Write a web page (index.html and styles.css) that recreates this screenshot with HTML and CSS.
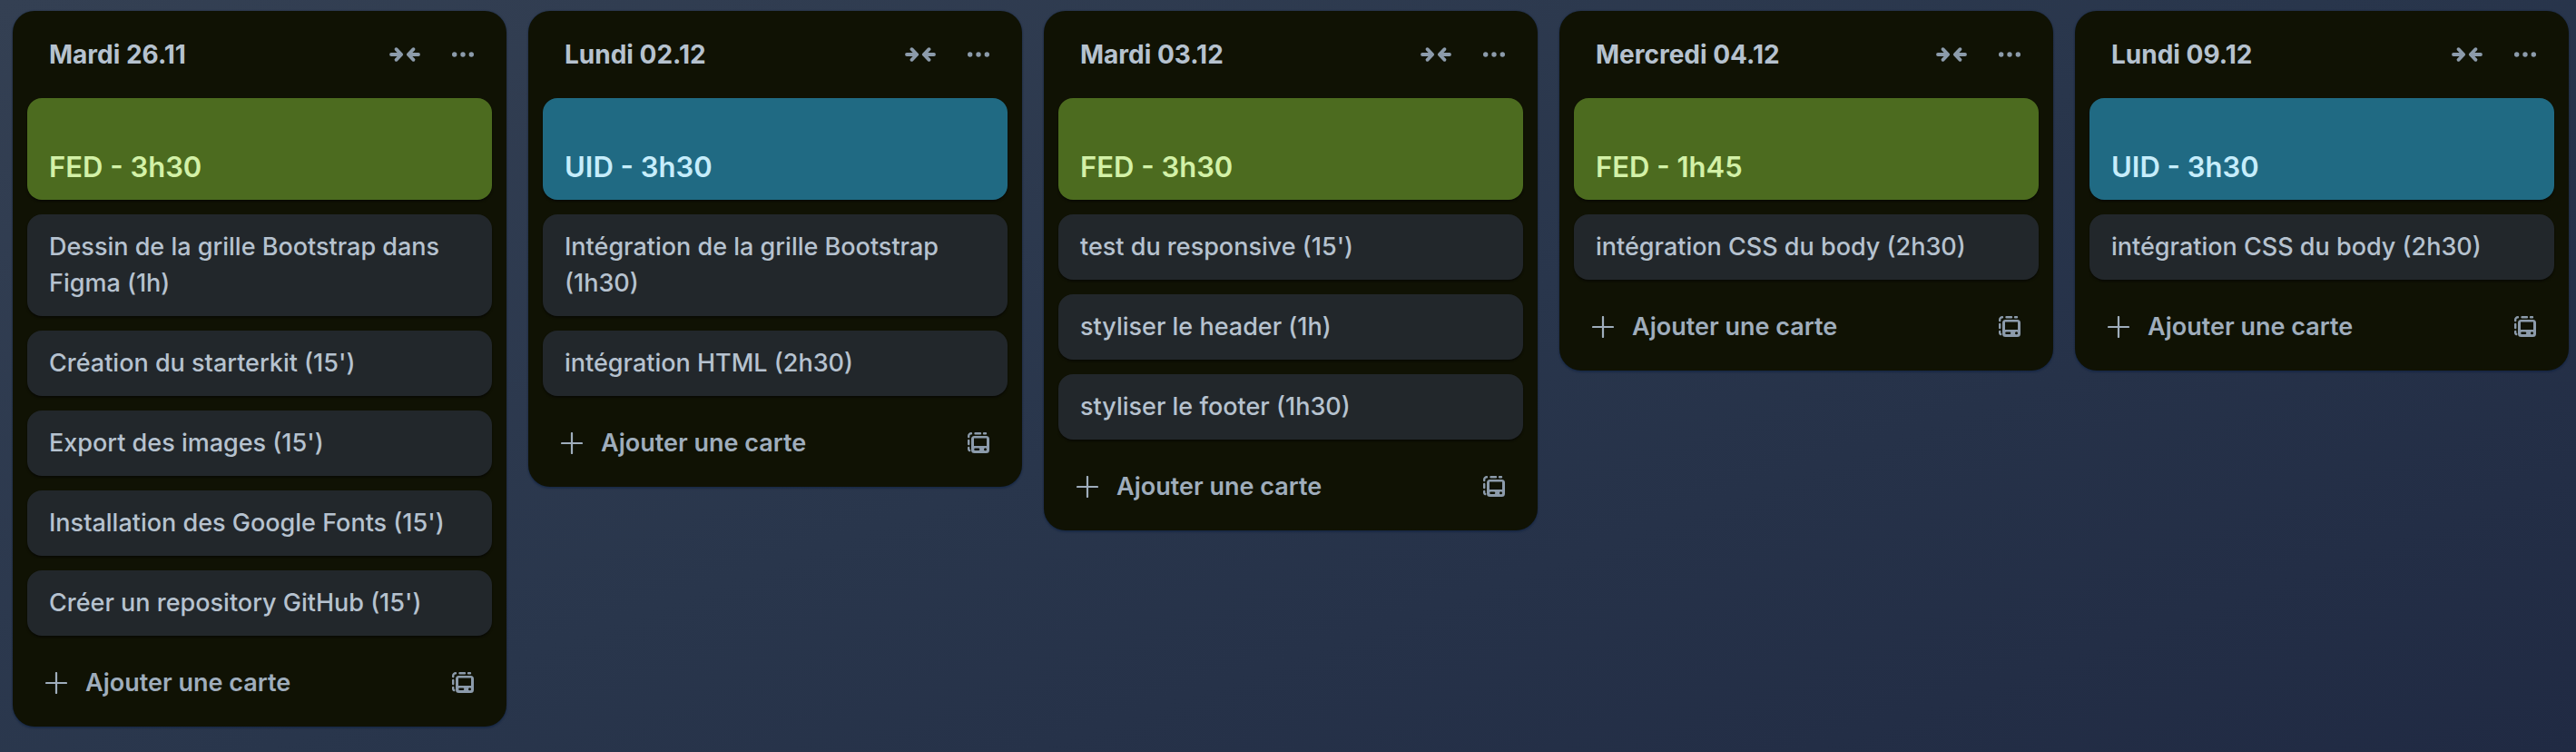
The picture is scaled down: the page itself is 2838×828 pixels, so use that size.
FILE: index.html
```html
<!DOCTYPE html>
<html lang="fr">
<head>
<meta charset="utf-8">
<meta name="viewport" content="width=device-width, initial-scale=1">
<title>Planning</title>
<link rel="stylesheet" href="styles.css">
</head>
<body>
<svg class="sprite" aria-hidden="true">
  <symbol id="collapse" viewBox="0 0 36 20">
    <path d="M3 10h10.500M8.500 4.200 14.200 10 8.500 15.800M33 10H22.500M27.500 4.200 21.800 10l5.700 5.800" fill="none" stroke="currentColor" stroke-width="3.800" stroke-linecap="round" stroke-linejoin="round"/>
  </symbol>
  <symbol id="more" viewBox="0 0 24 24">
    <g fill="currentColor"><circle cx="2.700" cy="12" r="2.700"/><circle cx="12" cy="12" r="2.700"/><circle cx="21.300" cy="12" r="2.700"/></g>
  </symbol>
  <symbol id="plus" viewBox="0 0 24 24">
    <path d="M12 1v22M1 12h22" fill="none" stroke="currentColor" stroke-width="2.200" stroke-linecap="round"/>
  </symbol>
  <symbol id="template" viewBox="0 0 24 24">
    <path d="M1.200 5V4a2.800 2.800 0 0 1 2.800-2.800M8.500 1.200h5.500M18 1.200h2M1.200 9v4M1.200 17v1.500a1.500 1.500 0 0 0 1 1.500" fill="none" stroke="currentColor" stroke-width="2.400" stroke-linecap="round"/>
    <path fill="currentColor" fill-rule="evenodd" d="M7.500 4h13A3.500 3.500 0 0 1 24 7.500v12a3.500 3.500 0 0 1-3.500 3.500h-13A3.500 3.500 0 0 1 4 19.500v-12A3.500 3.500 0 0 1 7.500 4zM7 6.500V15h14V6.500zM8.500 17.500a1.300 1.300 0 0 0 0 2.600h3.500a1.300 1.300 0 0 0 0-2.600zM19.500 17.300a1.500 1.500 0 1 0 0 3 1.500 1.500 0 0 0 0-3z"/>
  </symbol>
</svg>
<main class="board">
  <section class="list">
    <header class="list-header">
      <h2 class="list-title">Mardi 26.11</h2>
      <button class="icon-button" type="button" aria-label="Réduire la liste"><svg class="icon-wide"><use href="#collapse"/></svg></button>
      <button class="icon-button" type="button" aria-label="Actions de la liste"><svg class="icon"><use href="#more"/></svg></button>
    </header>
    <ul class="cards">
      <li class="card cover cover-lime">FED - 3h30</li>
      <li class="card">Dessin de la grille Bootstrap dans Figma (1h)</li>
      <li class="card">Création du starterkit (15')</li>
      <li class="card">Export des images (15')</li>
      <li class="card">Installation des Google Fonts (15')</li>
      <li class="card">Créer un repository GitHub (15')</li>
    </ul>
    <footer class="list-footer">
      <button class="add-button" type="button"><svg class="icon"><use href="#plus"/></svg>Ajouter une carte</button>
      <button class="icon-button" type="button" aria-label="Créer à partir d'un modèle"><svg class="icon"><use href="#template"/></svg></button>
    </footer>
  </section>
  <section class="list">
    <header class="list-header">
      <h2 class="list-title">Lundi 02.12</h2>
      <button class="icon-button" type="button" aria-label="Réduire la liste"><svg class="icon-wide"><use href="#collapse"/></svg></button>
      <button class="icon-button" type="button" aria-label="Actions de la liste"><svg class="icon"><use href="#more"/></svg></button>
    </header>
    <ul class="cards">
      <li class="card cover cover-sky">UID - 3h30</li>
      <li class="card">Intégration de la grille Bootstrap (1h30)</li>
      <li class="card">intégration HTML (2h30)</li>
    </ul>
    <footer class="list-footer">
      <button class="add-button" type="button"><svg class="icon"><use href="#plus"/></svg>Ajouter une carte</button>
      <button class="icon-button" type="button" aria-label="Créer à partir d'un modèle"><svg class="icon"><use href="#template"/></svg></button>
    </footer>
  </section>
  <section class="list">
    <header class="list-header">
      <h2 class="list-title">Mardi 03.12</h2>
      <button class="icon-button" type="button" aria-label="Réduire la liste"><svg class="icon-wide"><use href="#collapse"/></svg></button>
      <button class="icon-button" type="button" aria-label="Actions de la liste"><svg class="icon"><use href="#more"/></svg></button>
    </header>
    <ul class="cards">
      <li class="card cover cover-lime">FED - 3h30</li>
      <li class="card">test du responsive (15')</li>
      <li class="card">styliser le header (1h)</li>
      <li class="card">styliser le footer (1h30)</li>
    </ul>
    <footer class="list-footer">
      <button class="add-button" type="button"><svg class="icon"><use href="#plus"/></svg>Ajouter une carte</button>
      <button class="icon-button" type="button" aria-label="Créer à partir d'un modèle"><svg class="icon"><use href="#template"/></svg></button>
    </footer>
  </section>
  <section class="list">
    <header class="list-header">
      <h2 class="list-title">Mercredi 04.12</h2>
      <button class="icon-button" type="button" aria-label="Réduire la liste"><svg class="icon-wide"><use href="#collapse"/></svg></button>
      <button class="icon-button" type="button" aria-label="Actions de la liste"><svg class="icon"><use href="#more"/></svg></button>
    </header>
    <ul class="cards">
      <li class="card cover cover-lime">FED - 1h45</li>
      <li class="card">intégration CSS du body (2h30)</li>
    </ul>
    <footer class="list-footer">
      <button class="add-button" type="button"><svg class="icon"><use href="#plus"/></svg>Ajouter une carte</button>
      <button class="icon-button" type="button" aria-label="Créer à partir d'un modèle"><svg class="icon"><use href="#template"/></svg></button>
    </footer>
  </section>
  <section class="list">
    <header class="list-header">
      <h2 class="list-title">Lundi 09.12</h2>
      <button class="icon-button" type="button" aria-label="Réduire la liste"><svg class="icon-wide"><use href="#collapse"/></svg></button>
      <button class="icon-button" type="button" aria-label="Actions de la liste"><svg class="icon"><use href="#more"/></svg></button>
    </header>
    <ul class="cards">
      <li class="card cover cover-sky">UID - 3h30</li>
      <li class="card">intégration CSS du body (2h30)</li>
    </ul>
    <footer class="list-footer">
      <button class="add-button" type="button"><svg class="icon"><use href="#plus"/></svg>Ajouter une carte</button>
      <button class="icon-button" type="button" aria-label="Créer à partir d'un modèle"><svg class="icon"><use href="#template"/></svg></button>
    </footer>
  </section>
</main>
</body>
</html>
```
FILE: styles.css
```css
* {
  box-sizing: border-box;
}

body {
  margin: 0;
  min-height: 100vh;
  background: linear-gradient(160deg, #344053 0%, #29364c 50%, #202a43 100%);
  color: #b6c2cf;
  font-family: Inter, "Liberation Sans", sans-serif;
  font-size: 27px;
  font-weight: 500;
  line-height: 40px;
}

.sprite {
  position: absolute;
  width: 0;
  height: 0;
}

.board {
  display: flex;
  align-items: flex-start;
  gap: 24px;
  padding: 12px 8px 12px 14px;
}

.list {
  flex: 1 1 0;
  min-width: 480px;
  padding: 16px;
  border-radius: 24px;
  background: #101204;
  box-shadow: 0 2px 2px rgba(9, 30, 66, 0.4), 0 0 2px rgba(9, 30, 66, 0.5);
}

.list-header {
  display: flex;
  align-items: center;
  margin-bottom: 16px;
  padding-left: 24px;
}

.list-title {
  flex: 1;
  margin: 0;
  font-size: 28px;
  font-weight: 700;
}

.cards {
  display: flex;
  flex-direction: column;
  gap: 16px;
  margin: 0 0 20px;
  padding: 0;
  list-style: none;
}

.card {
  padding: 16px 24px;
  border-radius: 16px;
  background: #22272b;
  box-shadow: 0 2px 2px rgba(3, 4, 4, 0.5);
}

.cover {
  padding-top: 56px;
  font-size: 31px;
  font-weight: 600;
}

.cover-lime {
  background: #4c6b1f;
  color: #d3f1a7;
}

.cover-sky {
  background: #206a83;
  color: #c6edfb;
}

.list-footer {
  display: flex;
  align-items: center;
}

.icon-button,
.add-button {
  display: flex;
  align-items: center;
  height: 64px;
  border: 0;
  border-radius: 16px;
  background: none;
  font: inherit;
  cursor: pointer;
}

.icon-button {
  justify-content: center;
  width: 64px;
  padding: 0;
  color: #8c9bab;
}

.add-button {
  flex: 1;
  gap: 20px;
  padding: 0 20px;
  color: #9fadbc;
  font-weight: 600;
}

.icon {
  width: 24px;
  height: 24px;
  overflow: visible;
}

.icon-wide {
  width: 36px;
  height: 20px;
}
```
